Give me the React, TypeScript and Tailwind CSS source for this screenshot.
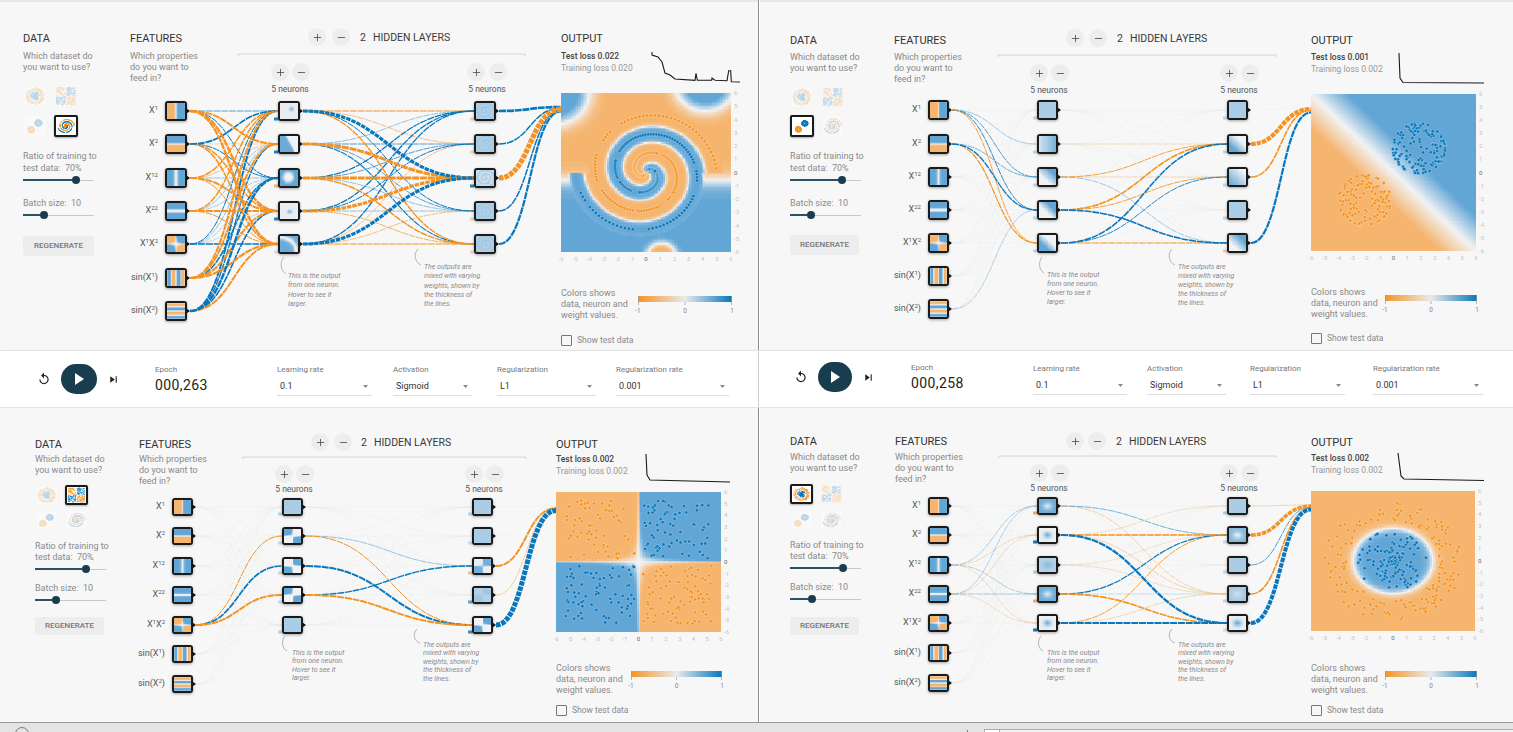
import { Minus, Plus } from "lucide-react";

type Fn = (x: number, y: number) => number;

const clamp = (v: number, a = -1, b = 1) => Math.min(b, Math.max(a, v));
const hex = (c: number[]) => `rgb(${c.map((v) => Math.round(v)).join(",")})`;
const mix = (a: number[], b: number[], t: number) => a.map((v, i) => v + (b[i] - v) * t);

// heatmap colours, softer than the link colours
const heatColor = (v: number) =>
  v < 0 ? hex(mix([241, 242, 243], [245, 181, 111], -v)) : hex(mix([241, 242, 243], [98, 166, 213], v));
const rawColor = (v: number) =>
  v < 0 ? hex(mix([232, 234, 235], [245, 147, 34], -v)) : hex(mix([232, 234, 235], [8, 119, 189], v));

const flat = (v: number): Fn => () => v;
const blob = (cx: number, cy: number, s: number, base: number, amp: number): Fn => (x, y) =>
  base + amp * Math.exp(-((x - cx) ** 2 + (y - cy) ** 2) / s);
const xorWhite = (s: number): Fn => (x, y) => Math.max(0, Math.tanh(s * x * y * 0.5));
const diag = (base: number, k: number): Fn => (x, y) => clamp(base + (x + y) * k, 0.02);

const spiralField = (x: number, y: number) => Math.cos(Math.atan2(x, y) - 2.199 * Math.hypot(x, y));
const smooth = (a: number, b: number, v: number) => {
  const t = clamp((v - a) / (b - a), 0, 1);
  return t * t * (3 - 2 * t);
};

const spiralHeat: Fn = (x, y) => {
  const r = Math.hypot(x, y);
  const th = Math.atan2(x, y);
  const inner = Math.tanh(3 * (spiralField(x, y) - 0.22));
  let bg = Math.tanh((-y - 0.6) * 1.5);
  const g = (cx: number, cy: number, s: number) => {
    const q = ((x - cx) ** 2 + (y - cy) ** 2) / s;
    return Math.exp(-(q * q));
  };
  bg = clamp(bg + 2.4 * g(-6.4, 6, 6) + 2.4 * g(4.2, 6.8, 5) - 2.4 * g(1.1, -6.4, 1.2));
  // the outermost arm at this angle decides where the spiral stops
  const k = Math.floor((3.5 * Math.PI - th) / Math.PI);
  const r0 = (th + k * Math.PI) / 2.199 + 0.25;
  const m = smooth(r0, r0 + 0.35, r);
  return inner + (bg - inner) * m;
};

const features: Fn[] = [
  (x) => Math.tanh(x * 1.4),
  (_, y) => Math.tanh(y * 1.4),
  (x) => 1 - Math.exp(-x * x * 0.7),
  (_, y) => 1 - Math.exp(-y * y * 0.7),
  (x, y) => Math.tanh(x * y * 0.5),
  (x) => clamp(Math.sin(x) * 1.3),
  (_, y) => clamp(Math.sin(y) * 1.3),
];

function rng(seed: number) {
  let a = seed;
  return () => {
    a = (a + 0x6d2b79f5) | 0;
    let t = Math.imul(a ^ (a >>> 15), 1 | a);
    t = (t + Math.imul(t ^ (t >>> 7), 61 | t)) ^ t;
    return ((t ^ (t >>> 14)) >>> 0) / 4294967296;
  };
}

type Dot = [number, number, number];

function circleDots(): Dot[] {
  const r = rng(11);
  const out: Dot[] = [];
  for (let i = 0; i < 150; i++) {
    const a = r() * 6.283;
    const d = r() * 2.6;
    out.push([d * Math.sin(a), d * Math.cos(a), 1]);
  }
  for (let i = 0; i < 170; i++) {
    const a = r() * 6.283;
    const d = 3.4 + r() * 1.7;
    out.push([d * Math.sin(a), d * Math.cos(a), -1]);
  }
  return out;
}

function xorDots(): Dot[] {
  const r = rng(23);
  const out: Dot[] = [];
  for (let i = 0; i < 300; i++) {
    const x = (r() * 10 - 5) * 1;
    const y = r() * 10 - 5;
    const px = x + (x > 0 ? 0.3 : -0.3);
    const py = y + (y > 0 ? 0.3 : -0.3);
    out.push([px, py, px * py > 0 ? 1 : -1]);
  }
  return out;
}

function gaussDots(): Dot[] {
  const r = rng(37);
  const out: Dot[] = [];
  for (const [c, label] of [
    [1.85, 1],
    [-2.1, -1],
  ]) {
    for (let i = 0; i < 130; i++) {
      const a = r() * 6.283;
      const d = ((r() + r() + r()) / 3) * 3;
      out.push([c + Math.min(d, 1.9) * Math.sin(a), c + Math.min(d, 1.9) * Math.cos(a), label]);
    }
  }
  return out;
}

function spiralDots(): Dot[] {
  const r = rng(5);
  const out: Dot[] = [];
  const n = 170;
  for (const [delta, label] of [
    [0, 1],
    [Math.PI, -1],
  ]) {
    let skip = 0;
    for (let i = 0; i < n; i++) {
      if (skip > 0) {
        skip--;
        continue;
      }
      if (r() < 0.06) {
        skip = Math.floor(r() * 6);
      }
      const d = (i / n) * 5;
      const t = (1.75 * i * 2 * Math.PI) / n + delta;
      out.push([d * Math.sin(t), d * Math.cos(t), label]);
    }
  }
  return out;
}

const DOTS = [circleDots(), xorDots(), gaussDots(), spiralDots()];

const HEATS: Fn[] = [
  (x, y) => Math.tanh((2.9 - Math.hypot(x, y * 1.04)) * 2.6),
  (x, y) => Math.tanh(x * y * 3),
  (x, y) => clamp((x + y) * 0.38),
  spiralHeat,
];

function Heat({ f, n = 14 }: { f: Fn; n?: number }) {
  const paths: Record<number, string> = {};
  for (let j = 0; j < n; j++) {
    let start = 0;
    let cur = 99;
    for (let i = 0; i <= n; i++) {
      const lv = i === n ? 99 : Math.round(clamp(f(-6 + (12 * (i + 0.5)) / n, 6 - (12 * (j + 0.5)) / n)) * 16);
      if (lv !== cur) {
        if (cur !== 99) paths[cur] = (paths[cur] || "") + `M${start} ${j}h${i - start}v1h${start - i}z`;
        cur = lv;
        start = i;
      }
    }
  }
  return (
    <svg viewBox={`0 0 ${n} ${n}`} preserveAspectRatio="none" shapeRendering="crispEdges" className="block w-full h-full">
      {Object.keys(paths).map((k) => (
        <path key={k} d={paths[Number(k)]} fill={heatColor(Number(k) / 16)} />
      ))}
    </svg>
  );
}

type Cfg = {
  ox: number;
  oy: number;
  panel: string;
  dataCol: string;
  featCol: string;
  outCol: string;
  descMt: string;
  thumbMt: string;
  thumbGrid: string;
  thumbH: string;
  ratioMt: string;
  lineH: string;
  ratioW: string;
  batchMt: string;
  batchW: string;
  btn: string;
  active: number;
  lossMt: string;
  lossW: string;
  lossH: string;
  heatMt: string;
  heatBox: string;
  colorMt: string;
  colorW: string;
  checkMt: string;
  boxX: number;
  ys: number[];
  bw: number;
  bh: number;
  h1x: number;
  h2x: number;
  top: { plus: number; minus: number; y: number; label: number };
  rule: { y: number; a: number; b: number };
  ctl: { xs: number[]; y: number; c1: number; c2: number; ny: number };
  heat: { x: number; y: number; w: number; h: number };
  legendW: number;
  loss: { test: string; train: string; w: number; path: string };
  note1: { x: number; y: number; lh: string; curve: string };
  note2: { x: number; y: number; lh: string; curve: string };
  h1: Fn[];
  h2: Fn[];
  b1: number[];
  b2: number[];
  l1: number[][];
  l2: number[][];
  l3: number[];
};

const sf = (base: number, amp: number): Fn => (x, y) => base + amp * spiralField(x, y);

const A: Cfg = {
  ox: 0,
  oy: 0,
  panel: "w-[759px] h-[350px] pl-[23px] pt-[31px] shadow-[inset_0_2px_0_#e6e6e6] border-r border-r-[#8f8f8f]",
  dataCol: "w-[107px]",
  featCol: "w-[431px]",
  outCol: "",
  descMt: "mt-[6px]",
  thumbMt: "mt-[12px]",
  thumbGrid: "w-[55px] gap-x-[7px] gap-y-[8px]",
  thumbH: "h-[22px]",
  ratioMt: "mt-[13px]",
  lineH: "leading-[12px]",
  ratioW: "w-[49px]",
  batchMt: "mt-[11px]",
  batchW: "w-[17px]",
  btn: "mt-[15px] h-[20px] w-[71px]",
  active: 3,
  lossMt: "mt-[5px]",
  lossW: "w-[89px]",
  lossH: "h-[33px]",
  heatMt: "mt-[10px]",
  heatBox: "w-[170px] h-[159px]",
  colorMt: "mt-[36px]",
  colorW: "w-[77px]",
  checkMt: "mt-[13px]",
  boxX: 165,
  ys: [111, 144, 178, 211, 244, 278, 311],
  bw: 22,
  bh: 20,
  h1x: 278,
  h2x: 474,
  top: { plus: 317, minus: 341, y: 37, label: 360 },
  rule: { y: 54, a: 238, b: 525 },
  ctl: { xs: [280, 301, 476, 498], y: 72, c1: 290, c2: 487, ny: 89 },
  heat: { x: 561, y: 93, w: 170, h: 159 },
  legendW: 94,
  loss: {
    test: "0.022",
    train: "0.020",
    w: 91,
    path: "M2 1V4L8 6L12 11L15 22L20 24L25 28L45 29.3L46 22.3L47.3 29.3L61.7 29.3L62 27L65 29.3L77 29.7L78.7 19.7L80.7 19.7L81.3 30.7L90 31",
  },
  note1: { x: 288, y: 272, lh: "leading-[9.3px]", curve: "M284 257C279 263 281 271 286 274" },
  note2: { x: 424, y: 263, lh: "leading-[9.3px]", curve: "M418 249C413 254 415 262 421 265" },
  h1: [
    blob(1.5, 1.5, 2.5, 0.04, 0.75),
    (x, y) => clamp(Math.tanh((1.5 - x - y * 0.45) * 0.9) * 0.95, 0.03),
    (x, y) => {
      const q = ((x + 0.6) / 3.8) ** 2 + ((y - 0.6) / 4.2) ** 2;
      return clamp(1 - Math.exp(-(q ** 2.2)), 0.02);
    },
    blob(0.4, -0.6, 2.2, 0.04, 0.7),
    (x, y) => 0.92 - 0.9 * Math.exp(-((Math.hypot(x + 6, y + 6) - 11) ** 2) / 3),
  ],
  h2: [sf(0.5, 0.07), sf(0.5, 0.05), sf(0.36, 0.12), sf(0.5, 0.05), sf(0.5, 0.06)],
  b1: [0.9, 0.9, -0.6, 0.9, 0.1],
  b2: [-0.25, -0.25, 0.9, -0.25, -0.25],
  l1: [
    [0.8, -2, 1, -2.4, -2.4],
    [1.7, -0.5, 1, -1.5, -1.5],
    [-1.5, -0.7, 0.6, -2, -1],
    [-1.5, 0.6, 0.4, -2, -1],
    [1, 0.6, 0.4, 0.3, 1.5],
    [-2, -2, 1.5, -2, -2.2],
    [1.9, 1.3, 2.4, 1.6, -2],
  ],
  l2: [
    [-1.2, -0.7, 3.2, 1, -1.4],
    [0.6, 0.8, -3, 0.8, 1.1],
    [1.2, 0.8, -3, 0.6, -1.5],
    [1.3, 1, -3.2, 0.6, -0.8],
    [1.3, -0.7, 3.2, -0.7, -1.2],
  ],
  l3: [2.6, 1.5, -5.2, 1.5, 2.2],
};

const B: Cfg = {
  ox: 760,
  oy: 0,
  panel: "w-[753px] h-[350px] pl-[30px] pt-[33px] shadow-[inset_0_2px_0_#e6e6e6]",
  dataCol: "w-[104px]",
  featCol: "w-[417px]",
  outCol: "",
  descMt: "mt-[5px]",
  thumbMt: "mt-[12px]",
  thumbGrid: "w-[54px] gap-x-[7px] gap-y-[7px]",
  thumbH: "h-[22px]",
  ratioMt: "mt-[13px]",
  lineH: "leading-[12px]",
  ratioW: "w-[48px]",
  batchMt: "mt-[11px]",
  batchW: "w-[17px]",
  btn: "mt-[14px] h-[20px] w-[69px]",
  active: 2,
  lossMt: "mt-[4px]",
  lossW: "w-[87px]",
  lossH: "h-[33px]",
  heatMt: "mt-[10px]",
  heatBox: "w-[165px] h-[157px]",
  colorMt: "mt-[36px]",
  colorW: "w-[74px]",
  checkMt: "mt-[12px]",
  boxX: 928,
  ys: [110, 144, 177, 210, 243, 276, 309],
  bw: 21,
  bh: 20,
  h1x: 1037,
  h2x: 1227,
  top: { plus: 1075, minus: 1098, y: 38, label: 1117 },
  rule: { y: 55, a: 998, b: 1276 },
  ctl: { xs: [1039, 1060, 1229, 1250], y: 73, c1: 1049, c2: 1239, ny: 90 },
  heat: { x: 1311, y: 94, w: 165, h: 157 },
  legendW: 92,
  loss: { test: "0.001", train: "0.002", w: 86, path: "M1 1L2 26L5 30.5L86 31" },
  note1: { x: 1047, y: 271, lh: "leading-[9.1px]", curve: "M1042 257C1038 262 1039 270 1044 273" },
  note2: { x: 1178, y: 263, lh: "leading-[9.1px]", curve: "M1172 249C1167 254 1169 262 1175 265" },
  h1: [
    flat(0.5),
    (x) => 0.2 + (0.65 * (x + 6)) / 12,
    diag(0.35, 0.1),
    diag(0.35, 0.13),
    diag(0.4, -0.13),
  ],
  h2: [flat(0.5), diag(0.42, -0.09), diag(0.42, -0.05), flat(0.5), diag(0.45, 0.09)],
  b1: [0.18, 0.18, 0.18, 0.18, 0.18],
  b2: [0.18, 0.2, 0.18, 0.18, -0.4],
  l1: [
    [0, 0.5, 0.8, 0.9, -0.9],
    [0, 0, 0.7, 1.3, -1.2],
    [0, 0, 0, 0, 0],
    [0, 0, 0, 0, 0],
    [0, 0, 0, 0, 0],
    [0, 0, 0, 0, 0],
    [0, 0, 0, 0.4, 0],
  ],
  l2: [
    [0, 0, 0, 0, 0],
    [0, -0.3, 0, 0, 0],
    [0, -0.9, -0.4, 0, 0.5],
    [0, -1.6, -0.9, 0, 1.6],
    [0, 1.6, 0.9, 0, -1.2],
  ],
  l3: [0, -4.2, -1.6, 0, 2.2],
};

const C: Cfg = {
  ox: 0,
  oy: 408,
  panel: "w-[759px] h-[314px] pl-[35px] pt-[29px] border-r border-r-[#8f8f8f]",
  dataCol: "w-[104px]",
  featCol: "w-[417px]",
  outCol: "",
  descMt: "mt-[3px]",
  thumbMt: "mt-[9px]",
  thumbGrid: "w-[53px] gap-x-[7px] gap-y-[5px]",
  thumbH: "h-[20px]",
  ratioMt: "mt-[11px]",
  lineH: "leading-[11px]",
  ratioW: "w-[47px]",
  batchMt: "mt-[7px]",
  batchW: "w-[17px]",
  btn: "mt-[11px] h-[18px] w-[69px]",
  active: 1,
  lossMt: "mt-[2px]",
  lossW: "w-[89px]",
  lossH: "h-[31px]",
  heatMt: "mt-[8px]",
  heatBox: "w-[165px] h-[140px]",
  colorMt: "mt-[31px]",
  colorW: "w-[75px]",
  checkMt: "mt-[8px]",
  boxX: 172,
  ys: [507, 536, 566, 595, 625, 654, 684],
  bw: 21,
  bh: 18,
  h1x: 282,
  h2x: 472,
  top: { plus: 320, minus: 343, y: 442, label: 361 },
  rule: { y: 457, a: 243, b: 526 },
  ctl: { xs: [284, 305, 474, 495], y: 474, c1: 294, c2: 484, ny: 489 },
  heat: { x: 556, y: 492, w: 165, h: 140 },
  legendW: 91,
  loss: { test: "0.002", train: "0.002", w: 85, path: "M1 0L2 21L5 26L85 28" },
  note1: { x: 292, y: 649, lh: "leading-[8.4px]", curve: "M285 636C281 640 282 649 287 651" },
  note2: { x: 423, y: 641, lh: "leading-[8.4px]", curve: "M417 629C412 634 414 641 420 643" },
  h1: [flat(0.5), xorWhite(-1), xorWhite(1), xorWhite(-1), flat(0.5)],
  h2: [flat(0.5), flat(0.5), (x, y) => 0.45 + 0.4 * Math.tanh(x * y), (x, y) => 0.48 + 0.07 * Math.tanh(x * y), xorWhite(1)],
  b1: [0.2, 0.15, 0.15, 0.15, 0.2],
  b2: [0.2, 0.15, -0.4, 0.6, 0.8],
  l1: [
    [0, 0, 0, 0, 0],
    [0, 0, 0, 0, 0],
    [0, 0, 0, 0, 0],
    [0, 0, 0, 0, 0],
    [0, -1, 1.7, -2, 0],
    [0, 0, 0, 0, 0],
    [0, 0, 0, 0, 0],
  ],
  l2: [
    [0, 0, 0, 0, 0],
    [0, 0, 0.6, 0, -1],
    [0, 0, 0, 0, 2],
    [0, 0, 1.4, 0, -2],
    [0, 0, 0, 0, 0],
  ],
  l3: [0, 0, -2, -0.6, 5],
};

const D: Cfg = {
  ox: 760,
  oy: 408,
  panel: "w-[753px] h-[314px] pl-[30px] pt-[26px]",
  dataCol: "w-[105px]",
  featCol: "w-[416px]",
  outCol: "pt-[1px]",
  descMt: "mt-[4px]",
  thumbMt: "mt-[10px]",
  thumbGrid: "w-[53px] gap-x-[7px] gap-y-[6px]",
  thumbH: "h-[20px]",
  ratioMt: "mt-[10px]",
  lineH: "leading-[11px]",
  ratioW: "w-[49px]",
  batchMt: "mt-[7px]",
  batchW: "w-[18px]",
  btn: "mt-[12px] h-[18px] w-[69px]",
  active: 0,
  lossMt: "mt-[3px]",
  lossW: "w-[87px]",
  lossH: "h-[31px]",
  heatMt: "mt-[8px]",
  heatBox: "w-[164px] h-[140px]",
  colorMt: "mt-[32px]",
  colorW: "w-[74px]",
  checkMt: "mt-[8px]",
  boxX: 928,
  ys: [506, 535, 565, 594, 623, 653, 683],
  bw: 21,
  bh: 18,
  h1x: 1037,
  h2x: 1227,
  top: { plus: 1075, minus: 1097, y: 441, label: 1116 },
  rule: { y: 456, a: 999, b: 1276 },
  ctl: { xs: [1039, 1060, 1229, 1250], y: 473, c1: 1049, c2: 1239, ny: 488 },
  heat: { x: 1311, y: 491, w: 164, h: 140 },
  legendW: 92,
  loss: { test: "0.002", train: "0.002", w: 86, path: "M0 0L3 23L6 26L86 27.5" },
  note1: { x: 1047, y: 649, lh: "leading-[8.4px]", curve: "M1041 636C1037 640 1038 649 1043 651" },
  note2: { x: 1178, y: 641, lh: "leading-[8.4px]", curve: "M1172 629C1167 634 1169 641 1175 643" },
  h1: [
    blob(0, 0, 9, 0.92, -0.75),
    blob(0, 0, 7, 0.03, 0.85),
    blob(0, 0, 14, 0.4, 0.3),
    blob(0, 0, 9, 0.92, -0.75),
    blob(0, 0, 7, 0.03, 0.85),
  ],
  h2: [flat(0.5), blob(0, 0, 9, 0.75, -0.7), flat(0.5), blob(0, 0, 12, 0.55, -0.3), blob(0, 0, 8, 0.04, 0.9)],
  b1: [-0.7, 0.95, 0.25, -0.7, 0.95],
  b2: [0.25, 0.15, 0.15, 0.15, -0.2],
  l1: [
    [0, 0, 0, 0, 0],
    [0, 0, 0, 0, 0],
    [0.4, -0.4, 0, 0.4, -0.3],
    [0.4, -0.4, 0, 0.5, -0.3],
    [0, 0, 0, 0, 0],
    [0, 0, 0, 0, 0],
    [0, 0, 0, 0, 0],
  ],
  l2: [
    [0, 0.7, 0, -0.5, 0],
    [-0.3, -1.6, 0, -0.5, 2.2],
    [0, -0.2, 0, -0.3, 0],
    [0, 1.2, 0, 0.2, -1.6],
    [0, -0.9, 0, -0.4, 2.2],
  ],
  l3: [-0.5, -3.6, 0.8, -1.6, 4],
};

function link(x0: number, y0: number, x1: number, y1: number) {
  const m = (x0 + x1) / 2;
  return `M${x0} ${y0}C${m} ${y0} ${m} ${y1} ${x1} ${y1}`;
}

function Links({ c }: { c: Cfg }) {
  const items: { d: string; w: number }[] = [];
  const fx = c.boxX + c.bw + 3;
  const m1 = c.h1x + c.bw + 3;
  const m2 = c.h2x + c.bw + 3;
  c.l1.forEach((row, i) => row.forEach((w, j) => items.push({ d: link(fx, c.ys[i], c.h1x, c.ys[j]), w })));
  c.l2.forEach((row, i) => row.forEach((w, j) => items.push({ d: link(m1, c.ys[i], c.h2x, c.ys[j]), w })));
  c.l3.forEach((w, i) => items.push({ d: link(m2, c.ys[i], c.heat.x, c.heat.y + 14 + i * 1.1), w }));
  // faint ones first so that the heavy links lie on top
  items.sort((a, b) => Math.abs(a.w) - Math.abs(b.w));
  return (
    <>
      {items.map((it, i) => {
        const abs = Math.abs(it.w);
        const col = abs === 0 ? rawColor(0) : rawColor(Math.sign(it.w) * clamp(abs / 1.1 + 0.12, 0, 1));
        return (
          <path
            key={i}
            d={it.d}
            fill="none"
            stroke={col}
            strokeWidth={abs === 0 ? 0.8 : Math.max(abs, 0.6)}
            strokeOpacity={abs === 0 ? 0.55 : 1}
            strokeDasharray={abs > 3 ? "4.5 1" : "7 0.8"}
          />
        );
      })}
    </>
  );
}

function NodeBox({ x, y, c, f }: { x: number; y: number; c: Cfg; f: Fn }) {
  return (
    <div
      className="absolute border-2 border-[#1a1a1a] rounded-[3px] overflow-hidden bg-white shadow-[0_1px_3px_rgba(0,0,0,0.35)]"
      style={{ left: x - c.ox, top: y - c.bh / 2 - c.oy, width: c.bw, height: c.bh }}
    >
      <Heat f={f} n={20} />
    </div>
  );
}

function Round({ x, y, c, minus }: { x: number; y: number; c: Cfg; minus?: boolean }) {
  return (
    <div
      className="absolute w-[18px] h-[18px] rounded-full bg-[#ededed] flex items-center justify-center text-[#444]"
      style={{ left: x - 9 - c.ox, top: y - 9 - c.oy }}
    >
      {minus ? <Minus size={11} strokeWidth={1.7} /> : <Plus size={11} strokeWidth={1.7} />}
    </div>
  );
}

const FEATURE_LABELS = [
  <>X<sup className="text-[6px]">1</sup></>,
  <>X<sup className="text-[6px]">2</sup></>,
  <>X<sup className="text-[6px]">12</sup></>,
  <>X<sup className="text-[6px]">22</sup></>,
  <>X<sup className="text-[6px]">1</sup>X<sup className="text-[6px]">2</sup></>,
  <>sin(X<sup className="text-[6px]">1</sup>)</>,
  <>sin(X<sup className="text-[6px]">2</sup>)</>,
];

function Diagram({ c }: { c: Cfg }) {
  const lx = (x: number) => x - c.ox;
  const ly = (y: number) => y - c.oy;
  return (
    <div className="absolute inset-0">
      <svg className="absolute left-0 top-0 w-full h-full overflow-visible">
        <g transform={`translate(${-c.ox} ${-c.oy})`}>
          <Links c={c} />
          <path
            d={`M${c.rule.a} ${c.rule.y + 2}V${c.rule.y}H${c.rule.b}V${c.rule.y + 2}`}
            fill="none"
            stroke="#d4d4d4"
          />
          <path d={c.note1.curve} fill="none" stroke="#9a9a9a" strokeWidth={0.7} />
          <path d={c.note2.curve} fill="none" stroke="#9a9a9a" strokeWidth={0.7} />
          {[...c.ys.map((y) => [c.boxX, y]), ...c.ys.slice(0, 5).flatMap((y) => [[c.h1x, y], [c.h2x, y]])].map(([x, y], i) => (
            <path key={i} d={`M${x + c.bw - 0.5} ${y - 2.5}l3.5 2.5l-3.5 2.5z`} fill="#111" />
          ))}
          {c.ys.slice(0, 5).map((y, i) => (
            <g key={i}>
              <rect x={c.h1x - 4} y={y + c.bh / 2 - 3.5} width={4} height={3} fill={rawColor(c.b1[i])} />
              <rect x={c.h2x - 4} y={y + c.bh / 2 - 3.5} width={4} height={3} fill={rawColor(c.b2[i])} />
            </g>
          ))}
        </g>
      </svg>

      {c.ys.map((y, i) => (
        <div key={i}>
          <NodeBox x={c.boxX} y={y} c={c} f={features[i]} />
          <div
            className="absolute w-[60px] text-right text-[9px] leading-[12px] text-[#555]"
            style={{ left: lx(c.boxX) - 67, top: ly(y) - 7 }}
          >
            {FEATURE_LABELS[i]}
          </div>
        </div>
      ))}
      {c.ys.slice(0, 5).map((y, i) => (
        <div key={i}>
          <NodeBox x={c.h1x} y={y} c={c} f={c.h1[i]} />
          <NodeBox x={c.h2x} y={y} c={c} f={c.h2[i]} />
        </div>
      ))}

      <Round x={c.top.plus} y={c.top.y} c={c} />
      <Round x={c.top.minus} y={c.top.y} c={c} minus />
      <div
        className="absolute whitespace-nowrap text-[10.5px] leading-[14px] text-[#3a3a3a]"
        style={{ left: lx(c.top.label), top: ly(c.top.y) - 6 }}
      >
        2<span className="ml-[7px]">HIDDEN LAYERS</span>
      </div>
      <Round x={c.ctl.xs[0]} y={c.ctl.y} c={c} />
      <Round x={c.ctl.xs[1]} y={c.ctl.y} c={c} minus />
      <Round x={c.ctl.xs[2]} y={c.ctl.y} c={c} />
      <Round x={c.ctl.xs[3]} y={c.ctl.y} c={c} minus />
      {[c.ctl.c1, c.ctl.c2].map((cx) => (
        <div
          key={cx}
          className="absolute w-[60px] text-center text-[8.5px] leading-[10px] text-[#555]"
          style={{ left: lx(cx) - 30, top: ly(c.ctl.ny) - 5 }}
        >
          5 neurons
        </div>
      ))}
      <div
        className={`absolute whitespace-pre text-[7px] italic text-[#8a8a8a] ${c.note1.lh}`}
        style={{ left: lx(c.note1.x), top: ly(c.note1.y) }}
      >
        {"This is the output\nfrom one neuron.\nHover to see it\nlarger."}
      </div>
      <div
        className={`absolute whitespace-pre text-[7px] italic text-[#8a8a8a] ${c.note2.lh}`}
        style={{ left: lx(c.note2.x), top: ly(c.note2.y) }}
      >
        {"The outputs are\nmixed with varying\nweights, shown by\nthe thickness of\nthe lines."}
      </div>
    </div>
  );
}

function Thumb({ idx, active, h }: { idx: number; active: boolean; h: string }) {
  return (
    <div
      className={`${h} rounded-[2px] bg-white ${
        active ? "border-2 border-[#1a1a1a] shadow-[0_1px_2px_rgba(0,0,0,0.3)]" : "border border-[#f0f0f0] opacity-25"
      }`}
    >
      <svg viewBox="-6 -6 12 12" preserveAspectRatio="none" className="block w-full h-full">
        {DOTS[idx].map((d, i) => (
          <circle key={i} cx={d[0]} cy={-d[1]} r={0.34} fill={d[2] > 0 ? "#0877bd" : "#f59322"} />
        ))}
      </svg>
    </div>
  );
}

function Slider({ w }: { w: string }) {
  return (
    <div className="h-[12px] flex items-center">
      <div className={`${w} h-[1.5px] bg-[#2c5364]`} />
      <div className="w-[8px] h-[8px] rounded-full bg-[#183d4e] shrink-0" />
      <div className="flex-1 h-px bg-[#c8c8c8]" />
    </div>
  );
}

function Heading({ children }: { children: string }) {
  return <h2 className="relative top-[1px] text-[11px] leading-[14px] font-normal text-[#333]">{children}</h2>;
}

function DataColumn({ c }: { c: Cfg }) {
  return (
    <div className={c.dataCol}>
      <Heading>DATA</Heading>
      <p className={`${c.descMt} text-[9px] leading-[11px] text-[#8a8a8a] whitespace-pre`}>
        {"Which dataset do\nyou want to use?"}
      </p>
      <div className={`${c.thumbMt} ${c.thumbGrid} grid grid-cols-2`}>
        {[0, 1, 2, 3].map((i) => (
          <Thumb key={i} idx={i} active={c.active === i} h={c.thumbH} />
        ))}
      </div>
      <div className="w-[71px]">
        <p className={`${c.ratioMt} ${c.lineH} text-[9px] text-[#8a8a8a] whitespace-pre`}>
          {"Ratio of training to\ntest data:  70%"}
        </p>
        <Slider w={c.ratioW} />
        <p className={`${c.batchMt} leading-[12px] text-[9px] text-[#8a8a8a] whitespace-pre`}>{"Batch size:  10"}</p>
        <Slider w={c.batchW} />
      </div>
      <div
        className={`${c.btn} bg-[#ededed] rounded-[2px] flex items-center justify-center text-[8px] font-medium text-[#777]`}
      >
        REGENERATE
      </div>
    </div>
  );
}

function Legend({ w, id }: { w: number; id: string }) {
  return (
    <svg width={w + 6} height={28} className="block overflow-visible">
      <defs>
        <linearGradient id={id}>
          <stop offset="0" stopColor="#f59322" />
          <stop offset="0.5" stopColor="#e8eaeb" />
          <stop offset="1" stopColor="#0877bd" />
        </linearGradient>
      </defs>
      <rect x={0} y={8} width={w} height={6} fill={`url(#${id})`} />
      <path d={`M0.5 8V17M${w / 2} 14V17M${w - 0.5} 8V17`} stroke="#999" strokeWidth={0.7} />
      <g fontSize={6.5} fill="#888" textAnchor="middle">
        <text x={0} y={25}>-1</text>
        <text x={w / 2} y={25}>0</text>
        <text x={w} y={25}>1</text>
      </g>
    </svg>
  );
}

function Plot({ c }: { c: Cfg }) {
  const { w, h } = c.heat;
  const ticks = [-6, -5, -4, -3, -2, -1, 0, 1, 2, 3, 4, 5, 6];
  const sx = (v: number) => ((v + 6) / 12) * w;
  const sy = (v: number) => ((6 - v) / 12) * h;
  return (
    <div className={`${c.heatMt} ${c.heatBox} relative`}>
      <Heat f={HEATS[c.active]} n={110} />
      <svg className="absolute inset-0 w-full h-full overflow-visible">
        {DOTS[c.active].map((d, i) => (
          <circle
            key={i}
            cx={sx(d[0])}
            cy={sy(d[1])}
            r={1.7}
            fill={d[2] > 0 ? "#0877bd" : "#f59322"}
            stroke="#fff"
            strokeOpacity={0.55}
            strokeWidth={0.5}
          />
        ))}
        <g fontSize={6} textAnchor="middle">
          {ticks.map((t) => (
            <text key={t} x={sx(t)} y={h + 9} fill={t === 0 ? "#666" : "#c4c4c4"}>
              {t}
            </text>
          ))}
        </g>
        <g fontSize={6} textAnchor="start">
          {ticks.map((t) => (
            <text key={t} x={w + 3} y={sy(t) + 2} fill={t === 0 ? "#666" : "#c4c4c4"}>
              {t}
            </text>
          ))}
        </g>
      </svg>
    </div>
  );
}

function OutputColumn({ c, id }: { c: Cfg; id: string }) {
  return (
    <div className={c.outCol}>
      <Heading>OUTPUT</Heading>
      <div className={`${c.lossMt} ${c.lossH} flex`}>
        <div className={`${c.lossW} text-[8.5px] leading-[12px] whitespace-nowrap`}>
          <div className="font-medium text-[#444]">Test loss {c.loss.test}</div>
          <div className="text-[#999]">Training loss {c.loss.train}</div>
        </div>
        <svg width={c.loss.w} height={33} className="block overflow-visible mt-[1px]">
          <path d={c.loss.path} fill="none" stroke="#1a1a1a" strokeWidth={1.1} />
        </svg>
      </div>
      <Plot c={c} />
      <div className={`${c.colorMt} flex`}>
        <p className={`${c.colorW} text-[9px] leading-[11px] text-[#8a8a8a] whitespace-pre`}>
          {"Colors shows\ndata, neuron and\nweight values."}
        </p>
        <Legend w={c.legendW} id={id} />
      </div>
      <div className={`${c.checkMt} flex items-center gap-[5px] h-[12px]`}>
        <div className="w-[11px] h-[11px] border border-[#777] rounded-[1px]" />
        <span className="text-[8.5px] text-[#8a8a8a]">Show test data</span>
      </div>
    </div>
  );
}

function Panel({ c, id }: { c: Cfg; id: string }) {
  return (
    <section className={`${c.panel} relative flex bg-[#f7f7f7] overflow-hidden shrink-0`}>
      <DataColumn c={c} />
      <div className={c.featCol}>
        <Heading>FEATURES</Heading>
        <p className={`${c.descMt} text-[9px] leading-[11px] text-[#8a8a8a] whitespace-pre`}>
          {"Which properties\ndo you want to\nfeed in?"}
        </p>
      </div>
      <OutputColumn c={c} id={id} />
      <Diagram c={c} />
    </section>
  );
}

function Field({ label, value, cls }: { label: string; value: string; cls: string }) {
  return (
    <div className={cls}>
      <div className="text-[8px] leading-[10px] text-[#777]">{label}</div>
      <div className="mt-[3px] h-[18px] border-b border-[#dddddd] flex items-center justify-between pl-[3px] pr-[4px] text-[9px] text-[#333]">
        <span>{value}</span>
        <svg width="5" height="3" viewBox="0 0 5 3">
          <path d="M0 0h5L2.5 3z" fill="#888" />
        </svg>
      </div>
    </div>
  );
}

function Toolbar({
  epoch,
  cls,
  play,
  step,
  ep,
  fields,
}: {
  epoch: string;
  cls: string;
  play: string;
  step: string;
  ep: string;
  fields: string[];
}) {
  return (
    <div className={`${cls} flex items-center h-full bg-white`}>
      <svg width="14" height="14" viewBox="0 0 24 24" fill="#222" className="shrink-0">
        <path d="M12 5V1L7 6l5 5V7c3.31 0 6 2.69 6 6s-2.69 6-6 6-6-2.69-6-6H4c0 4.42 3.58 8 8 8s8-3.58 8-8-3.58-8-8-8z" />
      </svg>
      <div className={`${play} h-[30px] rounded-full bg-[#183d4e] flex items-center justify-center shrink-0`}>
        <svg width="10" height="12" viewBox="0 0 10 12">
          <path d="M1 0L10 6L1 12z" fill="#fff" />
        </svg>
      </div>
      <svg width="13" height="13" viewBox="0 0 24 24" fill="#222" className={`${step} shrink-0`}>
        <path d="M6 18l8.5-6L6 6v12zM16 6v12h2V6h-2z" />
      </svg>
      <div className={ep}>
        <div className="text-[8px] leading-[10px] text-[#777]">Epoch</div>
        <div className="mt-[2px] text-[14px] leading-[16px] text-[#222] tracking-[0.4px]">{epoch}</div>
      </div>
      <Field label="Learning rate" value="0.1" cls={fields[0]} />
      <Field label="Activation" value="Sigmoid" cls={fields[1]} />
      <Field label="Regularization" value="L1" cls={fields[2]} />
      <Field label="Regularization rate" value="0.001" cls={fields[3]} />
    </div>
  );
}

export default function App() {
  return (
    <div className="w-[1513px] h-[732px] overflow-hidden bg-[#f7f7f7] [font-family:Roboto,sans-serif]">
      <div className="flex h-[350px]">
        <Panel c={A} id="legend-a" />
        <div className="w-px shrink-0 bg-white" />
        <Panel c={B} id="legend-b" />
      </div>
      <div className="flex h-[58px] border-y border-[#e2e2e2] shadow-[0_1px_2px_rgba(0,0,0,0.06)] relative">
        <div className="w-[759px] shrink-0 border-r border-[#cfcfcf]">
          <Toolbar
            epoch="000,263"
            cls="pl-[37px]"
            play="w-[36px] ml-[10px]"
            step="ml-[10px]"
            ep="w-[122px] ml-[35px] shrink-0"
            fields={["w-[95px] mt-[3px] shrink-0", "w-[79px] ml-[21px] mt-[3px] shrink-0", "w-[99px] ml-[25px] mt-[3px] shrink-0", "w-[113px] ml-[20px] mt-[3px] shrink-0"]}
          />
        </div>
        <div className="flex-1">
          <Toolbar
            epoch="000,258"
            cls="pl-[35px] pb-[4px]"
            play="w-[34px] ml-[10px]"
            step="ml-[10px]"
            ep="w-[122px] ml-[36px] shrink-0"
            fields={["w-[94px] mt-[5px] shrink-0", "w-[79px] ml-[20px] mt-[5px] shrink-0", "w-[95px] ml-[24px] mt-[5px] shrink-0", "w-[110px] ml-[28px] mt-[5px] shrink-0"]}
          />
        </div>
      </div>
      <div className="flex h-[314px]">
        <Panel c={C} id="legend-c" />
        <div className="w-px shrink-0 bg-white" />
        <Panel c={D} id="legend-d" />
      </div>
      <div className="h-[10px] bg-[#e4e4e4] border-t border-[#9a9a9a] flex items-start overflow-hidden pl-[15px]">
        <div className="w-[14px] h-[14px] mt-[4px] rounded-full border border-[#777]" />
        <div className="w-[1px] h-[2px] mt-[7px] ml-[938px] bg-[#777]" />
        <div className="w-[16px] h-[10px] mt-[6px] ml-[16px] bg-white border border-[#aaaaaa]" />
        <div className="flex-1 h-[10px] mt-[6px] bg-[#f2f2f2] border-t border-[#aaaaaa]" />
      </div>
    </div>
  );
}
